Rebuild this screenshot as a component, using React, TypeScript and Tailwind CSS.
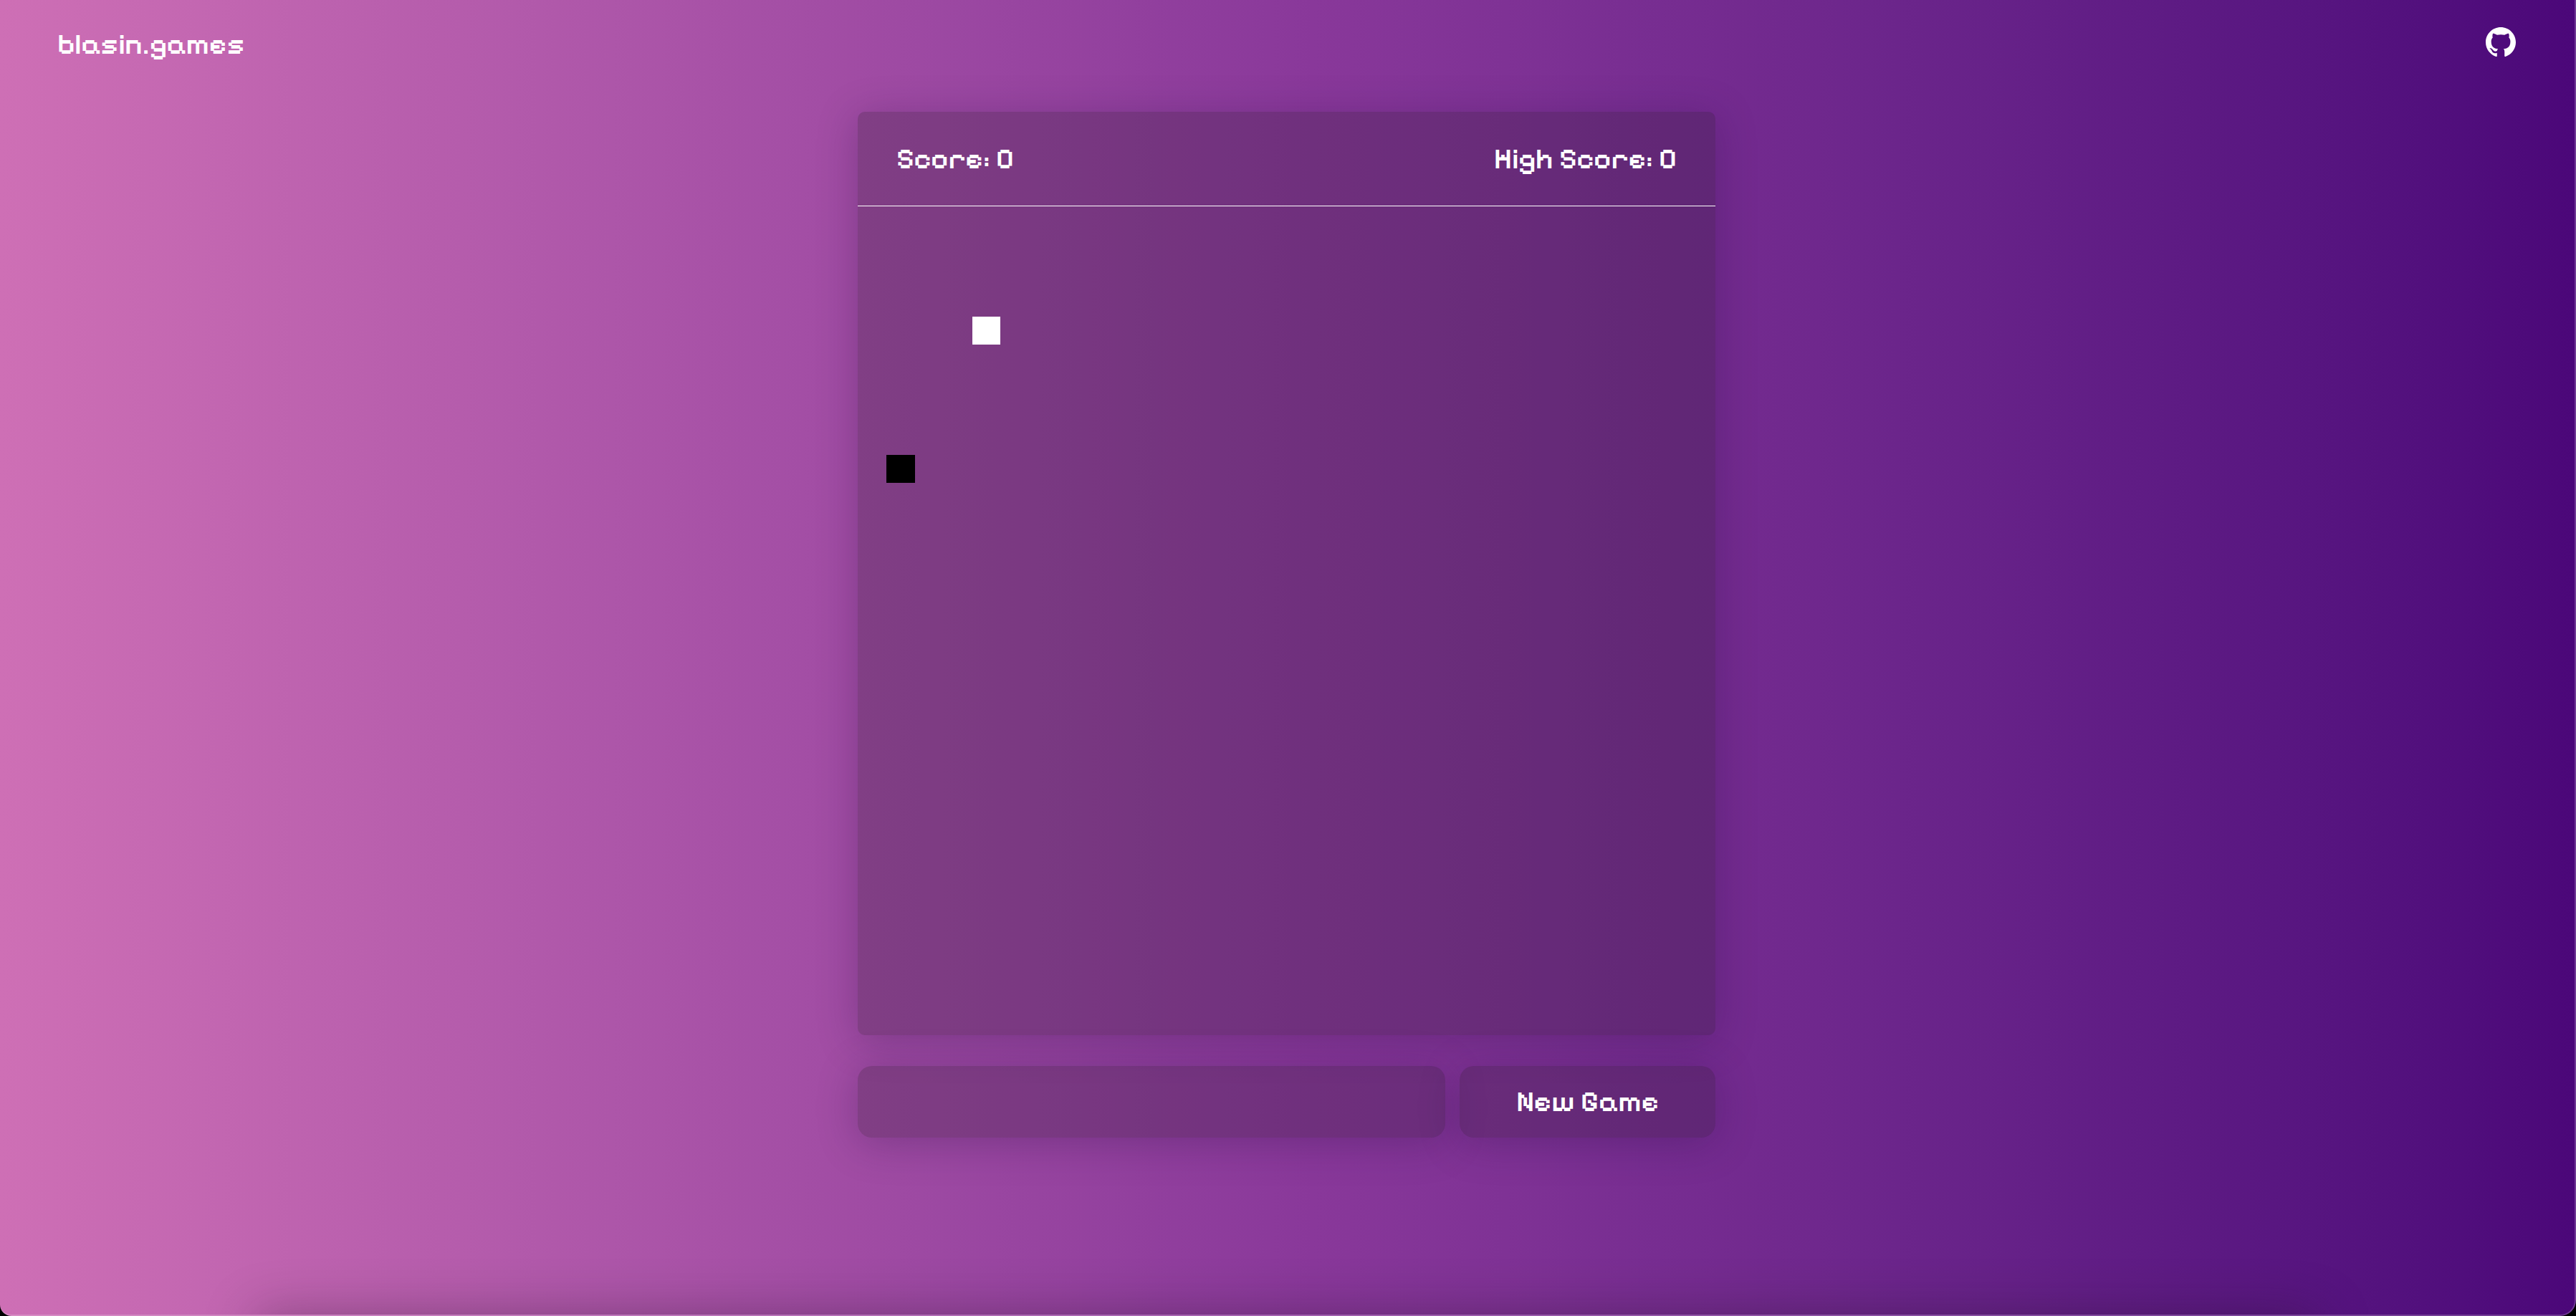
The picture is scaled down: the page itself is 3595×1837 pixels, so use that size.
import React from "react";

const snake = [{ col: 4, row: 4 }];
const food = { col: 1, row: 9 };

const panel = "bg-[#231828]/25 shadow-[0_8px_56px_rgba(31,10,60,0.26)]";

function GithubMark() {
  return (
    <svg viewBox="0 0 16 16" className="size-[42px] fill-white" aria-hidden="true">
      <path d="M8 0C3.58 0 0 3.58 0 8c0 3.54 2.29 6.53 5.47 7.59.4.07.55-.17.55-.38 0-.19-.01-.82-.01-1.49-2.01.37-2.53-.49-2.69-.94-.09-.23-.48-.94-.82-1.13-.28-.15-.68-.52-.01-.53.63-.01 1.08.58 1.23.82.72 1.21 1.87.87 2.33.66.07-.52.28-.87.51-1.07-1.78-.2-3.64-.89-3.64-3.95 0-.87.31-1.59.82-2.15-.08-.2-.36-1.02.08-2.12 0 0 .67-.21 2.2.82.64-.18 1.32-.27 2-.27s1.36.09 2 .27c1.53-1.04 2.2-.82 2.2-.82.44 1.1.16 1.92.08 2.12.51.56.82 1.27.82 2.15 0 3.07-1.87 3.75-3.65 3.95.29.25.54.73.54 1.48 0 1.07-.01 1.93-.01 2.2 0 .21.15.46.55.38A8.01 8.01 0 0 0 16 8c0-4.42-3.58-8-8-8Z" />
    </svg>
  );
}

function Cell({ col, row, className }: { col: number; row: number; className: string }) {
  return <div className={className} style={{ gridColumn: col + 1, gridRow: row + 1 }} />;
}

export default function App() {
  return (
    <div className="min-h-screen bg-black">
      <div className="relative flex min-h-screen flex-col overflow-hidden rounded-br-[22px] rounded-bl-[16px] border-r-2 border-b-2 border-white/20 bg-linear-to-r from-[#ce6fb5] via-[#89389a] via-51% to-[#4b0779] bg-origin-border pr-0.5 font-['Pixelify_Sans','Liberation_Sans',sans-serif] text-[42px] leading-[48px] font-medium text-white">
        <header className="flex h-[118px] items-center justify-between px-20">
          <a href="#home" className="pt-1.5">
            blasin.games
          </a>
          <a href="#github" aria-label="GitHub">
            <GithubMark />
          </a>
        </header>

        <main className="mx-auto mt-[38px] flex w-1/3 flex-col gap-[43px]">
          <section className={`rounded-[10px] ${panel}`}>
            <div className="flex h-[132px] items-center justify-between border-b border-white px-[54px]">
              <span>Score: 0</span>
              <span>High Score: 0</span>
            </div>
            <div className="grid aspect-[1198/1158] grid-cols-[repeat(30,minmax(0,1fr))] grid-rows-[repeat(30,minmax(0,1fr))]">
              {snake.map((s) => (
                <Cell key={`${s.col}-${s.row}`} {...s} className="bg-white" />
              ))}
              <Cell {...food} className="bg-black" />
            </div>
          </section>

          <div className="grid h-[100px] grid-cols-[2.3fr_1fr] gap-5">
            <div className={`rounded-[20px] ${panel}`} />
            <button type="button" className={`rounded-[20px] ${panel}`}>
              New Game
            </button>
          </div>
        </main>

        <div className="pointer-events-none absolute inset-x-[10%] top-full h-40 shadow-[0_0_70px_rgba(40,20,40,0.35)]" />
      </div>
    </div>
  );
}
